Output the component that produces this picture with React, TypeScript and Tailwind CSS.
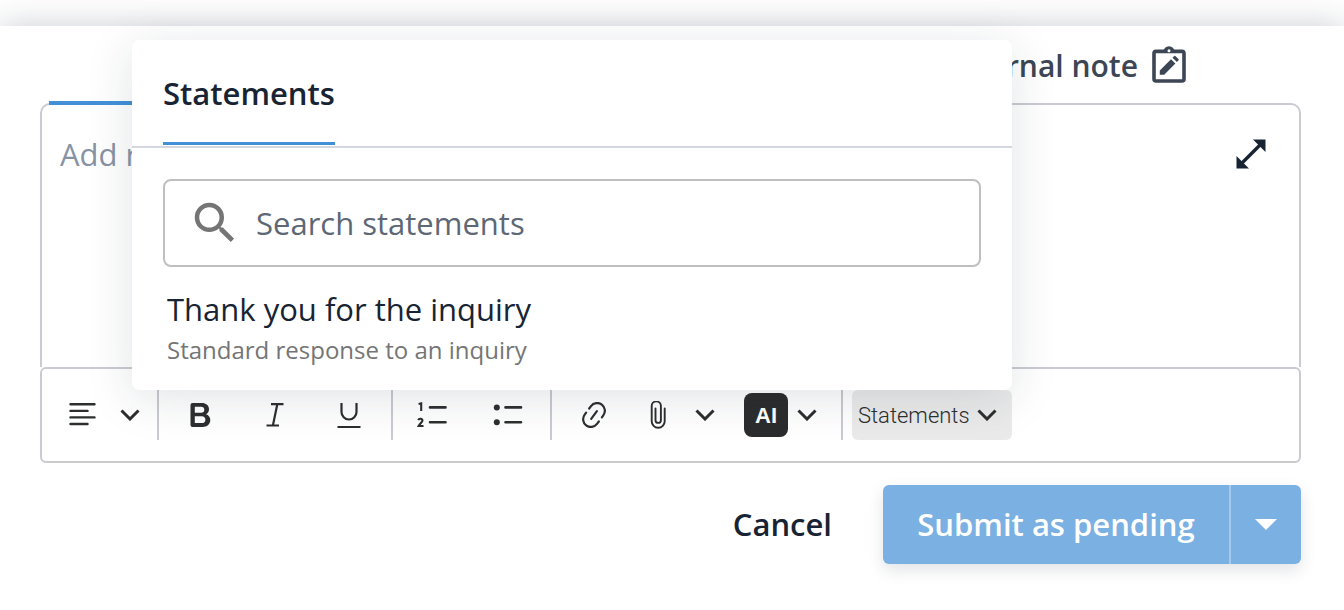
import React, { useState } from 'react';
import { MdSearch } from 'react-icons/md';

interface Statement {
  title: string;
  description: string;
}

const STATEMENTS: Statement[] = [
  { title: 'Thank you for the inquiry', description: 'Standard response to an inquiry' },
];

const Chevron = () => (
  <svg className="w-5 h-3 shrink-0" viewBox="0 0 20 12" fill="none" stroke="currentColor" strokeWidth="3">
    <path d="M1.5 1.5 10 10l8.5-8.5" />
  </svg>
);

const NoteIcon = () => (
  <svg className="w-[34px] h-10" viewBox="0 0 34 40" fill="none">
    <rect x="2" y="5.4" width="30" height="29.6" rx="2" stroke="currentColor" strokeWidth="3.6" />
    <path d="M11.5 5.5a5.5 5.2 0 0 1 11 0z" fill="currentColor" />
    <circle cx="17" cy="4.8" r="1.5" fill="white" />
    <path d="M7.8 28.8v-4.4L19 13.2l4.4 4.4-11.2 11.2zM20.5 11.7l1.5-1.5a1.1 1.1 0 0 1 1.6 0l2.8 2.8a1.1 1.1 0 0 1 0 1.6l-1.5 1.5z" fill="currentColor" />
  </svg>
);

const ExpandIcon = () => (
  <svg className="w-[30px] h-[30px]" viewBox="0 0 30 30" fill="currentColor">
    <path d="M17 0.5h12.5V13zM0.5 17v12.5H13z" />
    <path d="M5 25 25 5" stroke="currentColor" strokeWidth="3.4" />
  </svg>
);

const AlignIcon = () => (
  <svg className="w-[27px] h-6" viewBox="0 0 27 24" stroke="currentColor" strokeWidth="2.4" strokeLinecap="round">
    <path d="M1.5 1.2h24M1.5 7.9h17M1.5 14.4h24M1.5 21h17" />
  </svg>
);

const BoldIcon = () => (
  <svg className="w-6 h-6" viewBox="0 0 24 24" fill="currentColor" fillRule="evenodd">
    <path d="M3.5 0h9.3c4.2 0 7.2 2.4 7.2 6.2 0 2.3-1.2 4.1-3 5 2.6.8 4.3 3 4.3 5.8 0 4.2-3.2 7-7.8 7h-10a2 2 0 0 1-2-2V2a2 2 0 0 1 2-2zM5.8 3.8v5.9h6.3c2 0 3.2-1.1 3.2-3s-1.2-2.9-3.2-2.9zM5.8 13.3v6.8h7c2.2 0 3.6-1.3 3.6-3.4s-1.4-3.4-3.6-3.4z" />
  </svg>
);

const ItalicIcon = () => (
  <svg className="w-6 h-6" viewBox="0 0 24 24" fill="none" stroke="currentColor" strokeWidth="2.2">
    <path d="M8 1.2h12.5M3.5 22.5H16M14.3 1.2 9.9 22.5" />
  </svg>
);

const UnderlineIcon = () => (
  <svg className="w-6 h-7" viewBox="0 0 24 28" fill="none" stroke="currentColor" strokeWidth="2.2">
    <path d="M4.5 2v9a7.5 7.5 0 0 0 15 0V2M0.5 26h23" />
  </svg>
);

const OrderedIcon = () => (
  <svg className="w-[30px] h-[30px]" viewBox="0 0 30 30" fill="none" stroke="currentColor" strokeLinecap="round">
    <path d="M13 7.4h15.5M13 22.2h15.5" strokeWidth="2.6" />
    <path d="M1.6 4 4.2 3.4V11M1.2 20.2c.8-2.2 4.7-1.7 4.2.6-.3 1.4-2.3 2.6-3.8 5.2h4.9" strokeWidth="2.1" strokeLinecap="butt" />
  </svg>
);

const BulletIcon = () => (
  <svg className="w-[30px] h-[30px]" viewBox="0 0 30 30" fill="currentColor" stroke="currentColor" strokeLinecap="round">
    <path d="M12.5 7.4H28M12.5 22.2H28" strokeWidth="2.6" />
    <circle cx="3.8" cy="7.4" r="3" stroke="none" />
    <circle cx="3.8" cy="22.2" r="3" stroke="none" />
  </svg>
);

const LinkIcon = () => (
  <svg className="w-6 h-[26px]" viewBox="0 0 24 26" fill="none" stroke="currentColor" strokeWidth="2.2" strokeLinecap="round">
    <path d="M7.2 6.5 9 4.1a7.7 7.7 0 0 1 12.3 9.3l-1.4 1.9" />
    <path d="M16.8 19.5 15 21.9A7.7 7.7 0 0 1 2.7 12.6l1.4-1.9" />
    <path d="M9.2 16.8l5.7-7.6" />
  </svg>
);

const ClipIcon = () => (
  <svg className="w-[18px] h-7" viewBox="0 0 18 28" fill="none" stroke="currentColor" strokeWidth="1.9" strokeLinecap="round">
    <path d="M15.7 7.5v12.8a6.5 6.5 0 0 1-13 0V5a4.6 4.6 0 0 1 9.2 0v14.2a2.7 2.7 0 0 1-5.4 0V7.5" />
  </svg>
);

interface ToolProps {
  label: string;
  className?: string;
  children: React.ReactNode;
}

const Tool: React.FC<ToolProps> = ({ label, className = '', children }) => (
  <button type="button" aria-label={label} className={`shrink-0 flex items-center justify-center ${className}`}>
    {children}
  </button>
);

const Divider = () => <div className="w-0.5 h-[50px] shrink-0 bg-[#cacad0]" />;

const Toolbar = () => (
  <div className="flex items-center h-24 border-2 border-[#cacad0] rounded-md text-[#2d2e2f]">
    <div className="flex items-center gap-6 pl-[27px] pr-[17px]">
      <Tool label="Align"><AlignIcon /></Tool>
      <Tool label="Align options"><Chevron /></Tool>
    </div>
    <Divider />
    <div className="flex items-center px-[5px]">
      <Tool label="Bold" className="w-[74px]"><BoldIcon /></Tool>
      <Tool label="Italic" className="w-[74px]"><ItalicIcon /></Tool>
      <Tool label="Underline" className="w-[74px]"><UnderlineIcon /></Tool>
    </div>
    <Divider />
    <div className="flex items-center pr-1">
      <Tool label="Numbered list" className="w-[77px]"><OrderedIcon /></Tool>
      <Tool label="Bulleted list" className="w-[76px]"><BulletIcon /></Tool>
    </div>
    <Divider />
    <div className="flex items-center pl-[30px] pr-6">
      <Tool label="Link"><LinkIcon /></Tool>
      <Tool label="Attach file" className="ml-[43px]"><ClipIcon /></Tool>
      <Tool label="Attach options" className="ml-7"><Chevron /></Tool>
      <button type="button" className="ml-[29px] size-11 shrink-0 rounded-lg bg-[#2b2c2d] text-white text-[22px] font-bold font-['Liberation_Sans',sans-serif]">
        AI
      </button>
      <Tool label="AI options" className="ml-[9px]"><Chevron /></Tool>
    </div>
    <Divider />
    <button type="button" className="ml-[9px] w-40 h-[50px] shrink-0 flex items-center justify-between pl-1.5 pr-[15px] rounded-md bg-[#eaeaea] text-[22px] font-light font-['Roboto','Liberation_Sans',sans-serif]">
      Statements
      <Chevron />
    </button>
  </div>
);

const StatementsPopup = () => {
  const [query, setQuery] = useState('');
  const results = STATEMENTS.filter((s) => s.title.toLowerCase().includes(query.toLowerCase()));

  return (
    <div className="absolute left-[132px] top-3.5 z-20 w-[880px] h-[350px] rounded-lg bg-white shadow-[0_8px_48px_rgba(24,39,57,0.13)]">
      <div className="flex h-[108px] px-[31px] pb-px border-b-2 border-[#d4d7dd]">
        <button type="button" className="h-full pt-1 border-b-3 border-[#4291d8] text-[31px] font-semibold text-[#182433]">
          Statements
        </button>
      </div>
      <div className="px-[31px] pt-[31px]">
        <label className="flex items-center h-[88px] pl-[23px] border-2 border-[#bfbfbf] rounded-lg">
          <MdSearch className="size-[54px] shrink-0 text-[#757575]" />
          <input
            type="text"
            aria-label="Search statements"
            placeholder="Search statements"
            value={query}
            onChange={(e) => setQuery(e.target.value)}
            className="ml-3.5 flex-1 min-w-0 text-[31px] outline-none placeholder:text-[#5d6775]"
          />
        </label>
        <ul className="pt-[21px] pl-1">
          {results.map((s) => (
            <li key={s.title}>
              <button type="button" className="block text-left">
                <span className="block text-[31px] leading-[42px] text-[#182433]">{s.title}</span>
                <span className="block text-2xl leading-10 text-[#757575]">{s.description}</span>
              </button>
            </li>
          ))}
        </ul>
      </div>
    </div>
  );
};

const App = () => {
  const [reply, setReply] = useState('');

  return (
    <div className="min-h-screen pt-[26px] overflow-hidden bg-white font-['Open_Sans','Noto_Sans',sans-serif]">
      <main className="relative pl-10 pr-[43px] pb-[46px] bg-white shadow-[0_0_32px_rgba(30,40,65,0.23)]">
        {/* Reply / note tabs */}
        <div className="relative z-10 flex justify-between h-[79px] -mb-0.5 pl-[9px]">
          <button type="button" aria-label="Reply" className="w-[420px] border-b-4 border-[#4291d8]" />
          <button type="button" className="flex items-center gap-3.5 mr-[115px] text-[30px] font-semibold text-[#3c4655]">
            Internal note
            <NoteIcon />
          </button>
        </div>

        {/* Editor */}
        <div className="flex items-start h-[264px] border-2 border-b-0 border-[#cacad0] rounded-t-[10px]">
          <textarea
            aria-label="Reply text"
            placeholder="Add reply"
            value={reply}
            onChange={(e) => setReply(e.target.value)}
            className="flex-1 h-full pl-[18px] pt-[27px] text-[31px] leading-[44px] resize-none outline-none placeholder:text-[#8793a5]"
          />
          <button type="button" aria-label="Expand editor" className="mt-[34px] mr-[33px] text-[#182433]">
            <ExpandIcon />
          </button>
        </div>
        <Toolbar />

        <div className="flex justify-end mt-[22px]">
          <button type="button" className="mr-[51px] text-[31px] font-semibold text-[#182433]">Cancel</button>
          <div className="flex h-[79px] rounded-md bg-[#7ab0e2] text-white shadow-[0_6px_16px_rgba(24,39,57,0.13)]">
            <button type="button" className="w-[346px] text-[31px] font-semibold">Submit as pending</button>
            <button type="button" aria-label="More submit options" className="w-[72px] flex items-center justify-center border-l-2 border-[#a3c9ec]">
              <svg className="w-[22px] h-[11px]" viewBox="0 0 22 11" fill="currentColor">
                <path d="M0 0h22L11 11z" />
              </svg>
            </button>
          </div>
        </div>

        <StatementsPopup />
      </main>
    </div>
  );
};

export default App;
